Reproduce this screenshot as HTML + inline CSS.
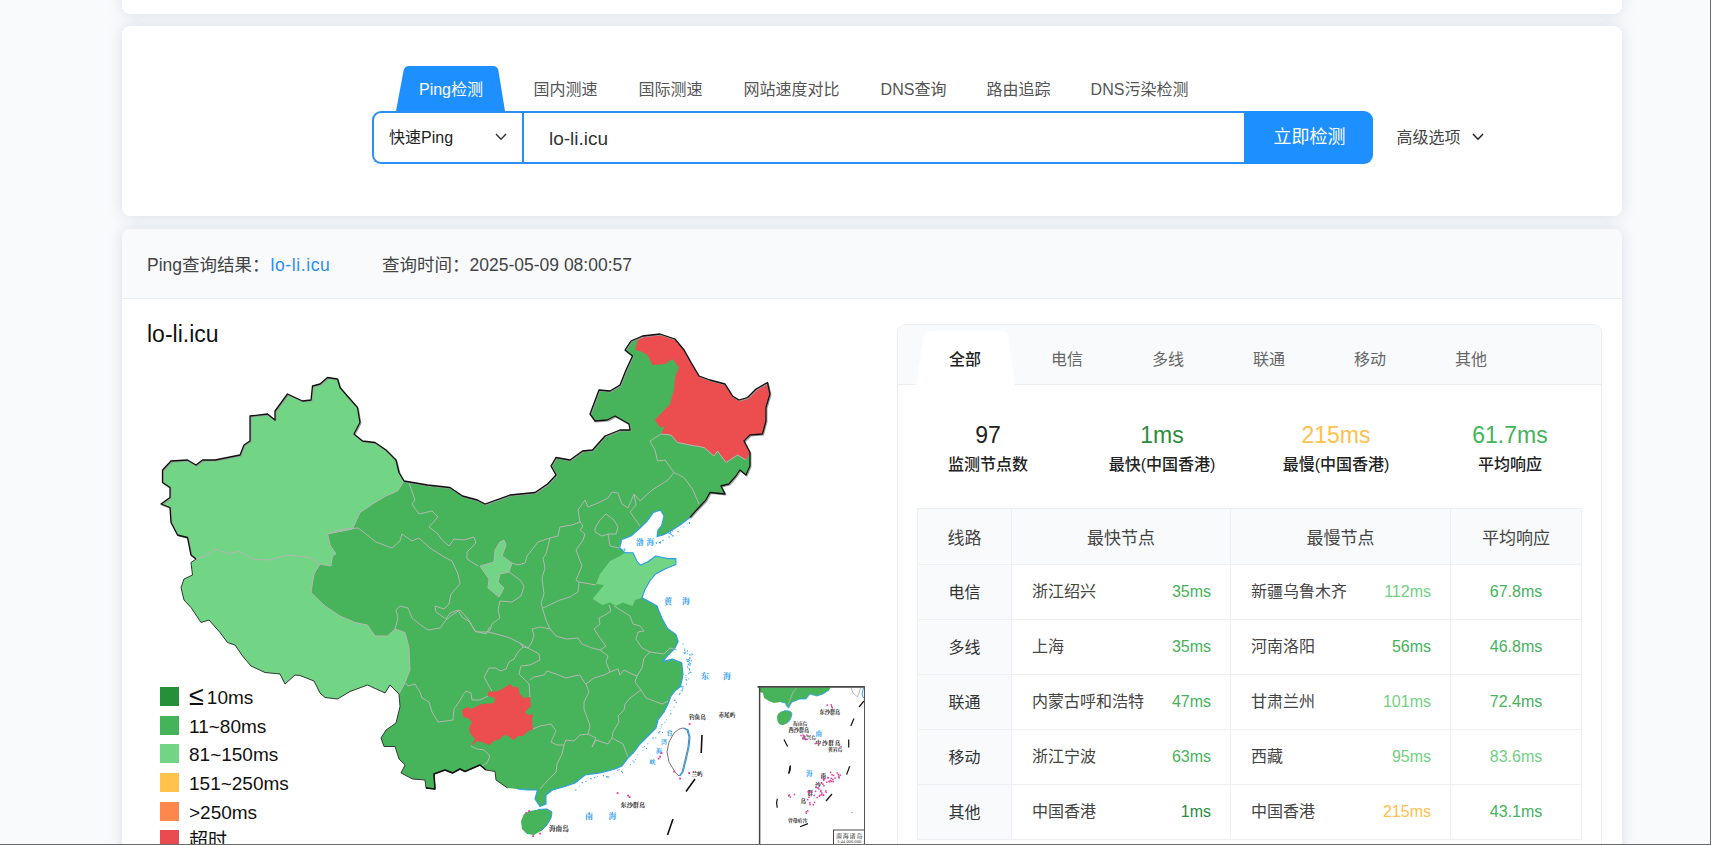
<!DOCTYPE html>
<html lang="zh-CN">
<head>
<meta charset="utf-8">
<title>Ping检测 - lo-li.icu</title>
<style>
*{box-sizing:border-box;margin:0;padding:0}
html,body{width:1711px;height:845px;overflow:hidden}
body{position:relative;background:#f8fafc;font-family:"Liberation Sans","Noto Sans CJK SC",sans-serif;color:#333;font-size:16px}
.abs{position:absolute}
.card{position:absolute;left:122px;width:1500px;background:#fff;border-radius:8px;box-shadow:0 0 14px rgba(110,130,160,.22)}
.t{position:absolute;white-space:nowrap;line-height:1}
.c{transform:translateX(-50%)}
.frame-r{position:absolute;left:1710px;top:0;width:1px;height:845px;background:#6a6a6a;z-index:50}
.frame-b{position:absolute;left:0;top:844px;width:1711px;height:1px;background:#6a6a6a;z-index:50}
/* search */
.navtab{position:absolute;top:82px;font-size:16px;color:#555;line-height:16px;white-space:nowrap;transform:translateX(-50%)}
.sel{position:absolute;left:372px;top:111px;width:152px;height:53px;border:2px solid #2b8ef5;border-right:none;border-radius:9px 0 0 9px;background:#fff}
.inp{position:absolute;left:522px;top:111px;width:724px;height:53px;border:2px solid #2b8ef5;border-right-color:#1e8fff;background:#fff}
.btn{position:absolute;left:1245.5px;top:111px;width:127px;height:53px;background:#1e8fff;border-radius:0 9px 9px 0}
/* result */
.rhead{position:absolute;left:0;top:0;width:1500px;height:70px;background:#f8fafc;border-bottom:1px solid #eceef1;border-radius:8px 8px 0 0}
.panel{position:absolute;left:897px;top:324px;width:705px;height:600px;border:1px solid #ebedf0;border-radius:9px;background:#fff;overflow:hidden}
.ptabs{position:absolute;left:0;top:0;width:703px;height:60px;background:#f8fafc;border-bottom:1px solid #ebedf0}
.ptab{position:absolute;top:352px;font-size:16px;line-height:16px;color:#666;white-space:nowrap}
.num{position:absolute;top:424px;font-size:23px;line-height:23px;white-space:nowrap;transform:translateX(-50%)}
.lab{position:absolute;top:457px;font-size:16px;line-height:16px;color:#222;font-weight:500;white-space:nowrap;transform:translateX(-50%)}
table{position:absolute;left:917px;top:508px;border-collapse:collapse;table-layout:fixed;width:664px;font-size:16px;color:#444}
td,th{border:1px solid #edeff2;height:55px;padding:0;font-weight:400;position:relative}
th{height:56px;background:#f8fafc;font-size:17px;color:#444;text-align:center}
td.k{background:#f8fafc;text-align:center;color:#333;padding-bottom:2px}
td .l{position:absolute;left:20px;top:19px;line-height:16px;white-space:nowrap}
td .r{position:absolute;right:19px;top:19px;line-height:16px;white-space:nowrap}
td.a{text-align:center}
.g1{color:#2a8c3c}.g2{color:#45b35a}.g3{color:#72d083}.y{color:#ffc04d}
.lg{position:absolute;left:160px;width:19px;height:19px}
.lgt{position:absolute;left:189px;font-size:19px;line-height:19px;color:#111;white-space:nowrap}
</style>
</head>
<body>
<!-- top card remnant -->
<div class="card" style="top:-20px;height:34px"></div>

<!-- search card -->
<div class="card" style="top:26px;height:190px"></div>
<svg class="abs" style="left:390px;top:60px" width="120" height="52" viewBox="390 60 120 52"><path d="M396 111 L403.6 70.5 Q404.6 66 409 66 L493 66 Q497.400 66 498.400 70.500 L505 111 Z" fill="#1e8fff"/></svg>
<div class="navtab" style="left:451px;color:#fff">Ping检测</div>
<div class="navtab" style="left:565.5px">国内测速</div>
<div class="navtab" style="left:670.500px">国际测速</div>
<div class="navtab" style="left:791.5px">网站速度对比</div>
<div class="navtab" style="left:913.5px">DNS查询</div>
<div class="navtab" style="left:1018.5px">路由追踪</div>
<div class="navtab" style="left:1139.5px">DNS污染检测</div>
<div class="sel"></div>
<div class="inp"></div>
<div class="btn"></div>
<div class="t" style="left:389px;top:130px;font-size:16px;color:#222">快速Ping</div>
<svg class="abs" style="left:494px;top:131px" width="14" height="12" viewBox="0 0 14 12"><path d="M2 3 L7 8.200 L12 3" fill="none" stroke="#333" stroke-width="1.400"/></svg>
<div class="t" style="left:549px;top:129px;font-size:19px;color:#333">lo-li.icu</div>
<div class="t c" style="left:1309.5px;top:128px;font-size:18px;color:#fff">立即检测</div>
<div class="t" style="left:1396.5px;top:130px;font-size:16px;color:#444">高级选项</div>
<svg class="abs" style="left:1471px;top:131px" width="14" height="12" viewBox="0 0 14 12"><path d="M2 3 L7 8.200 L12 3" fill="none" stroke="#222" stroke-width="1.500"/></svg>

<!-- result card -->
<div class="card" style="top:229px;height:700px"><div class="rhead"></div></div>
<div class="t" style="left:147px;top:257px;font-size:17.5px;color:#444">Ping查询结果：<span style="color:#2b8ef5;margin-left:1px;letter-spacing:0.6px">lo-li.icu</span></div>
<div class="t" style="left:382px;top:257px;font-size:17.5px;color:#444">查询时间：2025-05-09 08:00:57</div>
<div class="t" style="left:147px;top:323px;font-size:23px;color:#111">lo-li.icu</div>

<!-- MAP -->
<svg id="map" class="abs" style="left:140px;top:320px" width="740" height="525" viewBox="140 320 740 525">
<path d="M196 559 L191 555 L187.5 537.5 L177.5 535 L171 522.5 L170 507.5 L161 504 L170 497.5 L170 487.5 L162.5 482.5 L162.5 470 L171 461 L187.5 460 L196 465 L202.5 460 L215 460 L240 455 L244 445 L250 441 L250 416 L267.5 414 L275 420 L275 411 L287.5 394 L302.5 401 L311 400 L312.5 386 L320 384 L327.5 377.5 L337.5 379 L340 387.5 L350 399 L357.5 407.5 L360 422.5 L354 434 L362.5 441 L375 442.5 L386 450 L396 460 L399 472.5 L404 481 L427.5 485 L450 487.5 L462.5 496 L477.5 500 L485 504 L510 495 L535 492.5 L547.5 484 L556 475 L551 466 L556 457.5 L570 460 L582.5 451 L592.5 450 L605 436 L620 430 L630 430 L629 424 L615 416 L607.5 420 L595 421 L590 414 L599 390 L610 391 L620 385 L626 370 L632.5 356 L625 350 L631 341 L642.5 336 L660 334 L675 339 L684 350 L691 362.5 L699 376 L710 380 L725 384 L732.5 396 L739 400 L747.5 397.5 L756 389 L767.5 382.5 L770 394 L766 407.5 L766 421 L762.5 434 L750 435 L744 441 L750 452.5 L750 466 L746 475 L740 470 L736 476 L729 484 L721 486 L725 494 L710 492.5 L706 500 L697.5 509 L690 517.5 L679.4 525.5 L670 531.4 L663 535 L657 536.5 L658 530 L661.7 525.5 L664 516 L660.5 510 L653.4 512.5 L647.5 520.8 L639 529 L631 536 L621.4 539.7 L619.8 548 L625 552.7 L633 552.7 L636.8 561 L640.4 565 L647.5 562 L655.7 556 L667.6 558.6 L675.9 558.6 L675.9 564.6 L665 569 L655.7 574 L649.8 581 L645 589.4 L642 597.7 L651 602.4 L657 606 L661.7 617.8 L667.6 628.5 L675.9 634.4 L678.2 641.5 L674.7 648.6 L667.6 655.7 L662.8 661.6 L672.3 659 L681.8 662.8 L683 674.6 L680.6 686.5 L676 690 L671 696 L668 704 L664 712 L658 720 L656 728 L648 736 L640 744 L634 752 L628 758 L622 766 L615 769 L600 773 L585 775 L575 783 L565 786.5 L552.5 790 L546 795 L546 804 L540 806.5 L535 799 L537.5 790 L527.5 790 L517.5 789 L507.5 788 L496 780 L495 771.5 L486 770 L480 765 L465 771.5 L460 769 L452.5 773 L445 770 L434 774 L435 789 L426 788 L425 780 L412.5 779 L401 773 L405 765 L399 759 L395 746.5 L384 746.5 L381 738 L386 730 L396 723 L400 706.5 L399 694 L390 685 L385 693 L367.5 685 L350 691.5 L337.5 699 L325 697.5 L320 693 L314 681 L300 675.5 L295 675 L285 684 L280 674 L265 672.5 L251 666 L242.5 656 L235 645 L227.5 642.5 L220 632.5 L209 620 L201 622.5 L191 607.5 L184 600 L181 587.5 L184 579 L192.5 575 L191 562.5 L196 559 Z" fill="#47b35a"/>
<path d="M524 814 L530 811 L538 809.5 L547 809 L552 812 L551 818 L547 825 L541 831 L534 835 L527 834 L522 829 L521 821 Z" fill="#47b35a"/>
<path d="M196 559 L191 555 L187.5 537.5 L177.5 535 L171 522.5 L170 507.5 L161 504 L170 497.5 L170 487.5 L162.5 482.5 L162.5 470 L171 461 L187.5 460 L196 465 L202.5 460 L215 460 L240 455 L244 445 L250 441 L250 416 L267.5 414 L275 420 L275 411 L287.5 394 L302.5 401 L311 400 L312.5 386 L320 384 L327.5 377.5 L337.5 379 L340 387.5 L350 399 L357.5 407.5 L360 422.5 L354 434 L362.5 441 L375 442.5 L386 450 L396 460 L399 472.5 L404 481 L397.5 491 L386 496 L375 502.5 L360 512.5 L352.5 529 L327.5 534 L330 545 L336 554 L332.5 556 L331 566 L320 564 L310 557.5 L287.5 555 L270 560 L252.5 559 L239 551 L229 554 L215 549 L206 556 L196 559 Z" fill="#72d485"/>
<path d="M196 559 L206 556 L215 549 L229 554 L239 551 L252.5 559 L270 560 L287.5 555 L310 557.5 L320 564 L314 574 L311 592.5 L325 606 L340 616 L355 622.5 L367.5 625 L375 636 L387.5 636 L395 629 L405 632.5 L409 647.5 L410 670 L405 682.5 L399 694 L390 685 L385 693 L367.5 685 L350 691.5 L337.5 699 L325 697.5 L320 693 L314 681 L300 675.5 L295 675 L285 684 L280 674 L265 672.5 L251 666 L242.5 656 L235 645 L227.5 642.5 L220 632.5 L209 620 L201 622.5 L191 607.5 L184 600 L181 587.5 L184 579 L192.5 575 L191 562.5 L196 559 Z" fill="#72d485"/>
<path d="M504 540 L506 545 L502 556 L512 563 L509 572 L500 574 L498 582 L504 588 L499 597 L488 588 L489 579 L480 566 L494 562 L495 550 L500 542 Z" fill="#72d485"/>
<path d="M625 552.7 L633 552.7 L636.8 561 L640.4 565 L647.5 562 L655.7 556 L667.6 558.6 L675.9 558.6 L675.9 564.6 L665 569 L655.7 574 L649.8 581 L645 589.4 L642 597.7 L635 600 L632.5 606 L622.5 602.5 L616 606 L610 602.5 L602.5 605 L592.5 599 L604 585 L596 584 L600 574 L610 561 L620 556 Z" fill="#72d485"/>
<path d="M642.5 336 L660 334 L675 339 L684 350 L691 362.5 L699 376 L710 380 L725 384 L732.5 396 L739 400 L747.5 397.5 L756 389 L767.5 382.5 L770 394 L766 407.5 L766 421 L762.5 434 L750 435 L744 441 L750 452.5 L746 460 L737.5 455 L726 462.5 L717.5 451 L714 456 L704 447.5 L690 445 L677.5 442.5 L671 435 L661 434 L665 426 L660 427.5 L655 420 L670 404 L674 390 L675 377.5 L679 367.5 L672.5 359 L665 364 L652.5 365 L647.5 355 L640 351 L635 350 L637.5 341 Z" fill="#ec4e50"/>
<path d="M462 710 L467 707 L471 709 L482 704 L494 703 L495 698 L488 696 L488 692 L498 691 L504 688 L510 684 L513 687 L518 687 L520 694 L524 698 L530 697 L531 706 L525 712 L528 715 L533 714 L532 720 L533 729 L527 732 L523 736 L518 736 L514 740 L508 736 L504 735 L500 739 L494 741 L489 745 L482 742 L477 741 L471 746 L475 739 L470 733 L469 728 L472 722 L468 718 L463 717 Z" fill="#ec4e50"/>
<path d="M196 559 L206 556 L215 549 L229 554 L239 551 L252.5 559 L270 560 L287.5 555 L310 557.5 L320 564 M320 564 L331 566 L332.5 556 L336 554 L330 545 L327.5 534 L352.5 529 L360 512.5 L375 502.5 L386 496 L397.5 491 L404 481 M320 564 L314 574 L311 592.5 L325 606 L340 616 L355 622.5 L367.5 625 L375 636 L387.5 636 L395 629 M395 629 L405 632.5 L409 647.5 L410 670 L405 682.5 L399 694 M409 483 L415 500 L412 504 L419 514 L432 511 L438 517 L429 527 L438 534 L442 540 L449 546 L454 539 L464 540 L474 537 L476 543 L467 552 L467 559 L478 566 M327.5 534 L340 529.6 L358 528 L366 534 L376 542 L392 548 L400 541 L402 534 L412 541 L419 538 L430 548 L444 557 L452 561 L458 574 L460 584 L451 594 L449 604 L444 609 L435 606 L436 612 L446 619 L450 613 L458 610 L462 617 L470 622 L475 631 L486 634 L490 627 M395 629 L398 618 L396 610 L400 606 L408 608 L412 618 L422 626 L428 630 L440 628 L446 620 M504 540 L506 545 L502 556 L512 563 L509 572 L500 574 L498 582 L504 588 L499 597 L488 588 L489 579 L480 566 L494 562 L495 550 L500 542 L504 540 M509 572 L520 580 L524 586 L521 596 L512 602 L500 601 L498 610 L500 618 L492 624 L490 630 L488 632 M512 563 L518 565 L525 563 L527 556 L538 542 L550 538 L558 536 L560 527 L572 525 L580 522 L578 510 L585 500 L588 507 L598 503 L608 498 L612 492 L618 493 L622 504 L628 508 L634 494 L640 501 L652 490 L668 480 L674 472.5 M550 538 L546 554 L543 558 L545 568 L542 578 L544 594 L541 603 L543 610 L546 620 L550 629 M580 522 L583 526 L580 530 L585 534 L583 540 L576 550 L579 558 L582 566 L576 580 L579 582 L578 592 L570 597 L560 600 L543 608 M579 582 L596 585 M595 528 L600 520 L606 514 L614 520 L618 527 L616 534 L608 534 L602 536 L595 532 L595 528 M608 534 L610 546 L619 548 L622 541 M634 494 L636 505 L630 512 L640 526 M488 632 L476 632 L472 626 L468 619 L460 610 L452 615 L446 620 M488 632 L500 635 L510 638 L520 643 L528 648 L532 642 L534 635 L532 629 L540 627 L550 629 M550 629 L556 636 L566 639 L578 638 L582 644 L592 648 L600 650 L608 656 L606 662 L610 672 M586 684 L594 678 L604 675 L610 672 L618 669 L620 675 L624 670 L632 674 L637 676 M600 650 L606 646 L600 638 L594 629 L600 624 L599 618 L605 615 L611 611 L609 605 M614 606 L622 611 L630 616 L633 624 L640 626 L644 631 L638 632 L636 639 L642 648 L650 652 M637 676 L642 668 L644 658 L650 652 L664 654 L670 648 L677 650 M637 676 L635 682 L641 690 L630 698 L625 704 L624 710 L618 716 L619 722 L613 732 L612 738 L623 744 L628 757 M592 747 L596 740 L608 744 L612 738 M641 690 L646 698 L654 701 L662 704 L668 701 M492 691 L489 686 L484 677 L489 668 L496 668 L500 671 L506 669 L509 662 L514 659 L518 652 L523 647 L520 643 M523 647 L528 648 L539 654 L540 660 L530 665 L521 666 L519 674 L524 679 L529 684 L530 697 M530 680 L534 677 L544 675 L547 671 L556 674 L566 678 L574 676 L580 675 L584 682 L586 684 M586 684 L589 692 L584 702 L584 709 L588 720 L590 726 L588 734 L596 738 L592 747 M533 729 L540 726 L551 724 L556 731 L551 742 L557 745 L564 745 L566 740 L574 741 L580 735 L588 734 M564 745 L562 754 L557 764 L556 772 L548 780 L540 789 M405 682.5 L408 686 L415 684 L420 692 L422 698 L429 702 L432 712 L438 722 L446 721 L453 720 L454 709 L459 702 L463 695 L466 691 L471 693 L472 700 L480 700 L488 696 M471 746 L477 749 L484 750 L490 756 L487 763 L482 766 M661 434 L650 441 L655 450 L657.5 461 L665 460 L674 472.5 M674 472.5 L684 477.5 L692.5 489 L699 504 M746 460 L737.5 455 L726 462.5 L717.5 451 L714 456 L704 447.5 L690 445 L677.5 442.5 L671 435 L661 434" fill="none" stroke="#b4b8b4" stroke-width="1" stroke-linejoin="round"/>
<path d="M690 517.5 L679.4 525.5 L670 531.4 L663 535 L657 536.5 L658 530 L661.7 525.5 L664 516 L660.5 510 L653.4 512.5 L647.5 520.8 L639 529 L631 536 L621.4 539.7 L619.8 548 L625 552.7 L633 552.7 L636.8 561 L640.4 565 L647.5 562 L655.7 556 L667.6 558.6 L675.9 558.6 L675.9 564.6 L665 569 L655.7 574 L649.8 581 L645 589.4 L642 597.7 L651 602.4 L657 606 L661.7 617.8 L667.6 628.5 L675.9 634.4 L678.2 641.5 L674.7 648.6 L667.6 655.7 L662.8 661.6 L672.3 659 L681.8 662.8 L683 674.6 L680.6 686.5 L676 690 L671 696 L668 704 L664 712 L658 720 L656 728 L648 736 L640 744 L634 752 L628 758 L622 766 L615 769 L600 773 L585 775 L575 783 L565 786.5 L552.5 790 L546 795 L546 804 L540 806.5 L535 799 L537.5 790 L527.5 790 L517.5 789" fill="none" stroke="#2a9df0" stroke-width="1.1" stroke-linejoin="round"/>
<path d="M538 809.5 L547 809 L552 812 L551 818 L547 825 L541 831" fill="none" stroke="#2a9df0" stroke-width="1"/>
<path d="M196 559 L191 555 L187.5 537.5 L177.5 535 L171 522.5 L170 507.5 L161 504 L170 497.5 L170 487.5 L162.5 482.5 L162.5 470 L171 461 L187.5 460 L196 465 L202.5 460 L215 460 L240 455 L244 445 L250 441 L250 416 L267.5 414 L275 420 L275 411 L287.5 394 L302.5 401 L311 400 L312.5 386 L320 384 L327.5 377.5 L337.5 379 L340 387.5 L350 399 L357.5 407.5 L360 422.5 L354 434 L362.5 441 L375 442.5 L386 450 L396 460 L399 472.5 L404 481 L427.5 485 L450 487.5 L462.5 496 L477.5 500 L485 504 L510 495 L535 492.5 L547.5 484 L556 475 L551 466 L556 457.5 L570 460 L582.5 451 L592.5 450 L605 436 L620 430 L630 430 L629 424 L615 416 L607.5 420 L595 421 L590 414 L599 390 L610 391 L620 385 L626 370 L632.5 356 L625 350 L631 341 L642.5 336 L660 334 L675 339 L684 350 L691 362.5 L699 376 L710 380 L725 384 L732.5 396 L739 400 L747.5 397.5 L756 389 L767.5 382.5 L770 394 L766 407.5 L766 421 L762.5 434 L750 435 L744 441 L750 452.5 L750 466 L746 475 L740 470 L736 476 L729 484 L721 486 L725 494 L710 492.5 L706 500 L697.5 509 L690 517.5" fill="none" stroke="#9a9a9a" stroke-width="1.1" stroke-linejoin="round" transform="translate(0.9,1)"/>
<path d="M196 559 L191 555 L187.5 537.5 L177.5 535 L171 522.5 L170 507.5 L161 504 L170 497.5 L170 487.5 L162.5 482.5 L162.5 470 L171 461 L187.5 460 L196 465 L202.5 460 L215 460 L240 455 L244 445 L250 441 L250 416 L267.5 414 L275 420 L275 411 L287.5 394 L302.5 401 L311 400 L312.5 386 L320 384 L327.5 377.5 L337.5 379 L340 387.5 L350 399 L357.5 407.5 L360 422.5 L354 434 L362.5 441 L375 442.5 L386 450 L396 460 L399 472.5 L404 481 L427.5 485 L450 487.5 L462.5 496 L477.5 500 L485 504 L510 495 L535 492.5 L547.5 484 L556 475 L551 466 L556 457.5 L570 460 L582.5 451 L592.5 450 L605 436 L620 430 L630 430 L629 424 L615 416 L607.5 420 L595 421 L590 414 L599 390 L610 391 L620 385 L626 370 L632.5 356 L625 350 L631 341 L642.5 336 L660 334 L675 339 L684 350 L691 362.5 L699 376 L710 380 L725 384 L732.5 396 L739 400 L747.5 397.5 L756 389 L767.5 382.5 L770 394 L766 407.5 L766 421 L762.5 434 L750 435 L744 441 L750 452.5 L750 466 L746 475 L740 470 L736 476 L729 484 L721 486 L725 494 L710 492.5 L706 500 L697.5 509 L690 517.5" fill="none" stroke="#111" stroke-width="1.3" stroke-linejoin="round"/>
<path d="M507.5 788 L496 780 L495 771.5 L486 770 L480 765 L465 771.5 L460 769 L452.5 773 L445 770 L434 774 L435 789 L426 788 L425 780 L412.5 779 L401 773 L405 765 L399 759 L395 746.5 L384 746.5 L381 738 L386 730 L396 723 L400 706.5 L399 694 L390 685 L385 693 L367.5 685 L350 691.5 L337.5 699 L325 697.5 L320 693 L314 681 L300 675.5 L295 675 L285 684 L280 674 L265 672.5 L251 666 L242.5 656 L235 645 L227.5 642.5 L220 632.5 L209 620 L201 622.5 L191 607.5 L184 600 L181 587.5 L184 579 L192.5 575 L191 562.5 L196 559" fill="none" stroke="#2a2a2a" stroke-width="0.9" stroke-linejoin="round"/>
<path d="M486 770 L480 765 L465 771.5 L460 769 L452.5 773 L445 770 L434 774 L435 789 L426 788" fill="none" stroke="#111" stroke-width="1.5" stroke-linejoin="round"/>
<path d="M683 728 L687 730 L689 737 L688 747 L685 760 L682 772 L679 776 L675 772 L669 762 L667 752 L669 742 L674 733 L679 729 Z" fill="#fff" stroke="#555" stroke-width="0.8"/>
<path d="M683 728 L687 730 L689 737 L688 747 L685 760 L682 772 L679 776" fill="none" stroke="#2a9df0" stroke-width="1.2" transform="translate(1,0)"/>
<text x="636" y="544.5" font-size="7.5" fill="#2a9df0" font-family="Liberation Serif, Noto Serif CJK SC, serif" font-weight="700" >渤</text>
<text x="646.5" y="544.5" font-size="7.5" fill="#2a9df0" font-family="Liberation Serif, Noto Serif CJK SC, serif" font-weight="700" >海</text>
<text x="664" y="603.5" font-size="8" fill="#2a9df0" font-family="Liberation Serif, Noto Serif CJK SC, serif" font-weight="700" >黄</text>
<text x="682" y="603.5" font-size="8" fill="#2a9df0" font-family="Liberation Serif, Noto Serif CJK SC, serif" font-weight="700" >海</text>
<text x="701" y="679" font-size="8" fill="#2a9df0" font-family="Liberation Serif, Noto Serif CJK SC, serif" font-weight="700" >东</text>
<text x="723" y="679" font-size="8" fill="#2a9df0" font-family="Liberation Serif, Noto Serif CJK SC, serif" font-weight="700" >海</text>
<text x="585" y="818.5" font-size="8" fill="#2a9df0" font-family="Liberation Serif, Noto Serif CJK SC, serif" font-weight="700" >南</text>
<text x="608.5" y="818.5" font-size="8" fill="#2a9df0" font-family="Liberation Serif, Noto Serif CJK SC, serif" font-weight="700" >海</text>
<text x="666.5" y="735" font-size="6" fill="#2a9df0" font-family="Liberation Serif, Noto Serif CJK SC, serif" font-weight="700" >台</text>
<text x="661" y="744" font-size="6" fill="#2a9df0" font-family="Liberation Serif, Noto Serif CJK SC, serif" font-weight="700" >湾</text>
<text x="656" y="753" font-size="6" fill="#2a9df0" font-family="Liberation Serif, Noto Serif CJK SC, serif" font-weight="700" >海</text>
<text x="649.5" y="764" font-size="6" fill="#2a9df0" font-family="Liberation Serif, Noto Serif CJK SC, serif" font-weight="700" >峡</text>
<text x="689" y="718.5" font-size="5.6" fill="#222" font-family="Liberation Serif, Noto Serif CJK SC, serif" font-weight="700" >钓鱼岛</text>
<text x="718.5" y="716.5" font-size="5.6" fill="#222" font-family="Liberation Serif, Noto Serif CJK SC, serif" font-weight="700" >赤尾屿</text>
<text x="691.5" y="775.5" font-size="5.6" fill="#222" font-family="Liberation Serif, Noto Serif CJK SC, serif" font-weight="700" >兰屿</text>
<text x="620.5" y="806.5" font-size="6.2" fill="#222" font-family="Liberation Serif, Noto Serif CJK SC, serif" font-weight="700" >东沙群岛</text>
<text x="549" y="830.5" font-size="6.6" fill="#222" font-family="Liberation Serif, Noto Serif CJK SC, serif" font-weight="700" >海南岛</text>
<rect x="659.2" y="755.7" width="1.8" height="1.8" fill="#e83aa0"/>
<rect x="660.7" y="752.2" width="1.8" height="1.8" fill="#e83aa0"/>
<rect x="657.7" y="757.7" width="1.8" height="1.8" fill="#e83aa0"/>
<rect x="616.7" y="792.2" width="1.8" height="1.8" fill="#e83aa0"/>
<rect x="628.7" y="796.2" width="1.8" height="1.8" fill="#e83aa0"/>
<rect x="627.2" y="794.7" width="1.8" height="1.8" fill="#e83aa0"/>
<rect x="688.7" y="723.2" width="1.8" height="1.8" fill="#e83aa0"/>
<rect x="688.2" y="772.2" width="1.8" height="1.8" fill="#e83aa0"/>
<rect x="679.2" y="777.7" width="1.8" height="1.8" fill="#e83aa0"/>
<rect x="673.2" y="770.7" width="1.8" height="1.8" fill="#e83aa0"/>
<rect x="528.2" y="810.2" width="1.8" height="1.8" fill="#e83aa0"/>
<rect x="525.2" y="812.2" width="1.8" height="1.8" fill="#e83aa0"/>
<rect x="532.2" y="835.2" width="1.8" height="1.8" fill="#e83aa0"/>
<rect x="539.2" y="832.7" width="1.8" height="1.8" fill="#e83aa0"/>
<path d="M702 735 L701.2 753" stroke="#111" stroke-width="1.6" fill="none"/>
<path d="M695 779 L686 791.5" stroke="#111" stroke-width="1.6" fill="none"/>
<path d="M673 819 L667.5 835" stroke="#111" stroke-width="1.6" fill="none"/>
<rect x="652.5" y="737.5" width="1.2" height="1.2" fill="#2a9df0"/>
<rect x="685.4" y="677.2" width="0.8" height="0.8" fill="#2a9df0"/>
<rect x="687.0" y="666.4" width="1" height="1" fill="#2a9df0"/>
<rect x="686.8" y="660.8" width="1.2" height="1.2" fill="#2a9df0"/>
<rect x="579.3" y="785.8" width="0.8" height="0.8" fill="#2a9df0"/>
<rect x="686.3" y="658.8" width="1.2" height="1.2" fill="#2a9df0"/>
<rect x="686.4" y="679.9" width="0.8" height="0.8" fill="#2a9df0"/>
<rect x="581.7" y="782.0" width="1.2" height="1.2" fill="#2a9df0"/>
<rect x="688.9" y="669.1" width="1.2" height="1.2" fill="#2a9df0"/>
<rect x="633.7" y="761.7" width="1" height="1" fill="#2a9df0"/>
<rect x="660.9" y="726.5" width="0.8" height="0.8" fill="#2a9df0"/>
<rect x="585.5" y="781.0" width="1" height="1" fill="#2a9df0"/>
<rect x="659.7" y="728.4" width="0.8" height="0.8" fill="#2a9df0"/>
<rect x="659.2" y="731.1" width="1.2" height="1.2" fill="#2a9df0"/>
<rect x="688.8" y="672.5" width="1" height="1" fill="#2a9df0"/>
<rect x="655.3" y="737.3" width="1" height="1" fill="#2a9df0"/>
<rect x="690.1" y="671.8" width="1.2" height="1.2" fill="#2a9df0"/>
<rect x="689.2" y="664.6" width="1.2" height="1.2" fill="#2a9df0"/>
<rect x="629.8" y="764.4" width="0.8" height="0.8" fill="#2a9df0"/>
<rect x="630.1" y="764.3" width="0.8" height="0.8" fill="#2a9df0"/>
<rect x="661.3" y="724.1" width="1" height="1" fill="#2a9df0"/>
<rect x="688.1" y="664.4" width="0.8" height="0.8" fill="#2a9df0"/>
<rect x="632.5" y="760.4" width="1" height="1" fill="#2a9df0"/>
<rect x="637.5" y="754.0" width="0.8" height="0.8" fill="#2a9df0"/>
<rect x="673.6" y="706.5" width="1" height="1" fill="#2a9df0"/>
<rect x="682.4" y="643.6" width="1" height="1" fill="#2a9df0"/>
<rect x="681.8" y="689.4" width="1.2" height="1.2" fill="#2a9df0"/>
<rect x="688.7" y="659.7" width="1.2" height="1.2" fill="#2a9df0"/>
<rect x="594.2" y="776.9" width="1.2" height="1.2" fill="#2a9df0"/>
<rect x="642.6" y="746.9" width="0.8" height="0.8" fill="#2a9df0"/>
<rect x="685.5" y="675.1" width="0.8" height="0.8" fill="#2a9df0"/>
<rect x="597.0" y="776.0" width="0.8" height="0.8" fill="#2a9df0"/>
<rect x="575.2" y="789.6" width="1.2" height="1.2" fill="#2a9df0"/>
<rect x="647.3" y="743.3" width="1" height="1" fill="#2a9df0"/>
<rect x="617.2" y="770.0" width="1" height="1" fill="#2a9df0"/>
<rect x="666.3" y="719.4" width="0.8" height="0.8" fill="#2a9df0"/>
<rect x="608.1" y="776.4" width="1.2" height="1.2" fill="#2a9df0"/>
<rect x="661.9" y="732.0" width="1" height="1" fill="#2a9df0"/>
<rect x="606.2" y="775.9" width="1.2" height="1.2" fill="#2a9df0"/>
<rect x="590.1" y="778.1" width="0.8" height="0.8" fill="#2a9df0"/>
<rect x="670.1" y="713.1" width="1.2" height="1.2" fill="#2a9df0"/>
<rect x="618.5" y="769.2" width="1" height="1" fill="#2a9df0"/>
<rect x="622.1" y="772.2" width="1" height="1" fill="#2a9df0"/>
<rect x="644.4" y="746.1" width="0.8" height="0.8" fill="#2a9df0"/>
<rect x="621.1" y="770.7" width="1.2" height="1.2" fill="#2a9df0"/>
<rect x="684.4" y="648.3" width="0.8" height="0.8" fill="#2a9df0"/>
<rect x="685.9" y="683.5" width="1" height="1" fill="#2a9df0"/>
<rect x="678.8" y="693.5" width="1.2" height="1.2" fill="#2a9df0"/>
<rect x="642.6" y="749.7" width="0.8" height="0.8" fill="#2a9df0"/>
<rect x="673.8" y="699.8" width="1" height="1" fill="#2a9df0"/>
<rect x="682.4" y="688.3" width="1" height="1" fill="#2a9df0"/>
<rect x="681.0" y="686.1" width="1.2" height="1.2" fill="#2a9df0"/>
<rect x="688.0" y="678.5" width="0.8" height="0.8" fill="#2a9df0"/>
<rect x="674.4" y="699.7" width="1.2" height="1.2" fill="#2a9df0"/>
<rect x="658.1" y="732.2" width="1.2" height="1.2" fill="#2a9df0"/>
<rect x="645.9" y="747.8" width="1.2" height="1.2" fill="#2a9df0"/>
<rect x="634.9" y="759.1" width="0.8" height="0.8" fill="#2a9df0"/>
<rect x="606.7" y="776.5" width="1.2" height="1.2" fill="#2a9df0"/>
<rect x="684.1" y="649.5" width="1.2" height="1.2" fill="#2a9df0"/>
<rect x="685.6" y="679.1" width="1.2" height="1.2" fill="#2a9df0"/>
<rect x="613.7" y="772.9" width="0.8" height="0.8" fill="#2a9df0"/>
<rect x="675.6" y="701.7" width="1.2" height="1.2" fill="#2a9df0"/>
<rect x="686.8" y="650.4" width="1.2" height="1.2" fill="#2a9df0"/>
<rect x="602.9" y="775.1" width="1.2" height="1.2" fill="#2a9df0"/>
<rect x="590.5" y="778.2" width="1.2" height="1.2" fill="#2a9df0"/>
<rect x="664.4" y="721.8" width="1" height="1" fill="#2a9df0"/>
<rect x="682.4" y="686.2" width="1.2" height="1.2" fill="#2a9df0"/>
<rect x="669.8" y="710.2" width="0.8" height="0.8" fill="#2a9df0"/>
<rect x="681.3" y="690.5" width="1" height="1" fill="#2a9df0"/>
<rect x="679.6" y="692.9" width="1" height="1" fill="#2a9df0"/>
<rect x="690.4" y="654.4" width="1.2" height="1.2" fill="#2a9df0"/>
<rect x="687.6" y="663.6" width="1" height="1" fill="#2a9df0"/>
<rect x="689.2" y="654.2" width="1" height="1" fill="#2a9df0"/>
<rect x="688.1" y="661.1" width="1" height="1" fill="#2a9df0"/>
<rect x="688.2" y="673.5" width="0.8" height="0.8" fill="#2a9df0"/>
<rect x="683.5" y="652.1" width="0.8" height="0.8" fill="#2a9df0"/>
<rect x="689.9" y="663.1" width="1.2" height="1.2" fill="#2a9df0"/>
<rect x="689.3" y="658.1" width="1" height="1" fill="#2a9df0"/>
<rect x="687.7" y="667.9" width="0.8" height="0.8" fill="#2a9df0"/>
<rect x="687.2" y="660.8" width="0.8" height="0.8" fill="#2a9df0"/>
<rect x="691.4" y="652.9" width="0.8" height="0.8" fill="#2a9df0"/>
<rect x="692.2" y="653.8" width="1" height="1" fill="#2a9df0"/>
<rect x="688.4" y="663.9" width="0.8" height="0.8" fill="#2a9df0"/>
<rect x="684.2" y="652.9" width="1.2" height="1.2" fill="#2a9df0"/>
<rect x="687.6" y="659.1" width="1.2" height="1.2" fill="#2a9df0"/>
<rect x="687.0" y="653.3" width="0.8" height="0.8" fill="#2a9df0"/>
<rect x="684.1" y="652.2" width="1.2" height="1.2" fill="#2a9df0"/>
<rect x="689.3" y="657.2" width="1.2" height="1.2" fill="#2a9df0"/>
<rect x="688.9" y="662.3" width="1.2" height="1.2" fill="#2a9df0"/>
<rect x="690.7" y="660.2" width="1.2" height="1.2" fill="#2a9df0"/>
<rect x="688.9" y="668.4" width="0.8" height="0.8" fill="#2a9df0"/>
<rect x="684.6" y="651.7" width="1" height="1" fill="#2a9df0"/>
<rect x="670.1" y="532.4" width="1.2" height="1.2" fill="#2a9df0"/>
<rect x="686.8" y="522.8" width="0.8" height="0.8" fill="#2a9df0"/>
<rect x="670.1" y="531.5" width="1" height="1" fill="#2a9df0"/>
<rect x="683.4" y="526.4" width="1" height="1" fill="#2a9df0"/>
<rect x="668.6" y="532.9" width="1.2" height="1.2" fill="#2a9df0"/>
<rect x="672.4" y="530.7" width="0.8" height="0.8" fill="#2a9df0"/>
<rect x="671.5" y="529.9" width="1" height="1" fill="#2a9df0"/>
<rect x="671.3" y="533.8" width="0.8" height="0.8" fill="#2a9df0"/>
<rect x="688.9" y="522.9" width="1" height="1" fill="#2a9df0"/>
<rect x="670.5" y="534.1" width="1.2" height="1.2" fill="#2a9df0"/>
<rect x="688.8" y="522.0" width="1.2" height="1.2" fill="#2a9df0"/>
<rect x="677.5" y="531.0" width="1.2" height="1.2" fill="#2a9df0"/>
<rect x="656.1" y="543.1" width="0.8" height="0.8" fill="#2a9df0"/>
<rect x="672.5" y="535.2" width="1.2" height="1.2" fill="#2a9df0"/>
<rect x="658.8" y="542.0" width="1.2" height="1.2" fill="#2a9df0"/>
<rect x="660.2" y="541.1" width="1" height="1" fill="#2a9df0"/>
<rect x="662.1" y="540.4" width="0.8" height="0.8" fill="#2a9df0"/>
<rect x="668.6" y="536.5" width="1.2" height="1.2" fill="#2a9df0"/>
<rect x="672.0" y="535.6" width="0.8" height="0.8" fill="#2a9df0"/>
<rect x="659.8" y="542.3" width="1.2" height="1.2" fill="#2a9df0"/>
<rect x="655.7" y="542.2" width="1.2" height="1.2" fill="#2a9df0"/>
<rect x="662.4" y="539.6" width="1.2" height="1.2" fill="#2a9df0"/>
<rect x="624.3" y="549.6" width="1.2" height="1.2" fill="#2a9df0"/>
<rect x="619.8" y="543.1" width="1" height="1" fill="#2a9df0"/>
<rect x="622.4" y="549.4" width="1" height="1" fill="#2a9df0"/>
<rect x="623.9" y="548.5" width="1.2" height="1.2" fill="#2a9df0"/>
<rect x="620.3" y="542.9" width="0.8" height="0.8" fill="#2a9df0"/>
<rect x="626.8" y="551.9" width="1" height="1" fill="#2a9df0"/>
<g>
<rect x="759.5" y="687.5" width="105" height="170" fill="#fff"/>
<path d="M759.5 687.5 L831 687.5 L829 690 L823 694 L816.6 696 L810 694 L806 699 L800 699 L792 702 L789.5 706 L788.6 708 L786.5 706 L785.5 703 L781 702 L774 703 L769 701 L764 698 L763 693 L759.5 692 Z" fill="#47b35a"/>
<path d="M829 690 L823 694 L816.6 696 L810 694 L806 699 L800 699 L792 702 L789.5 706 L788.6 708 L786.5 706 L785.5 703 L781 702" fill="none" stroke="#2a9df0" stroke-width="0.8"/>
<path d="M797 687.5 L793 692 L790 700 L788 705" fill="none" stroke="#b4b8b4" stroke-width="0.8"/>
<path d="M777 717 Q777.5 712 784 710.8 Q791.5 710 792 714 Q791 721 784.500 724.5 Q777.5 727 777 717 Z" fill="#47b35a"/>
<path d="M784 710.8 Q791.5 710 792 714 Q791 721 786.5 723.5" fill="none" stroke="#2a9df0" stroke-width="0.8"/>
<path d="M851 687.5 L853 693 L857.5 697 L860 690 L861 687.5" fill="#fff" stroke="#888" stroke-width="0.6"/>
<path d="M863.500 688 L862 694 L863.500 698" fill="none" stroke="#2a9df0" stroke-width="1"/>
<text x="819.5" y="713.5" font-size="5.2" fill="#222" font-family="Liberation Serif, Noto Serif CJK SC, serif" font-weight="700" >东沙群岛</text>
<text x="793" y="724.5" font-size="4.8" fill="#222" font-family="Liberation Serif, Noto Serif CJK SC, serif" font-weight="700" >海南岛</text>
<text x="788.5" y="732" font-size="5.2" fill="#222" font-family="Liberation Serif, Noto Serif CJK SC, serif" font-weight="700" >西沙群岛</text>
<text x="802" y="738.5" font-size="4.6" fill="#222" font-family="Liberation Serif, Noto Serif CJK SC, serif" font-weight="700" >永兴岛</text>
<text x="815.5" y="744.5" font-size="5.6" fill="#222" font-family="Liberation Serif, Noto Serif CJK SC, serif" font-weight="700" letter-spacing="0.8">中沙群岛</text>
<text x="828" y="750.5" font-size="4.8" fill="#222" font-family="Liberation Serif, Noto Serif CJK SC, serif" font-weight="700" >黄岩岛</text>
<text x="820.5" y="778" font-size="5.6" fill="#222" font-family="Liberation Serif, Noto Serif CJK SC, serif" font-weight="700" >南</text>
<text x="815" y="786.5" font-size="5.6" fill="#222" font-family="Liberation Serif, Noto Serif CJK SC, serif" font-weight="700" >沙</text>
<text x="807.5" y="794.5" font-size="5.6" fill="#222" font-family="Liberation Serif, Noto Serif CJK SC, serif" font-weight="700" >群</text>
<text x="800.5" y="802.5" font-size="5.6" fill="#222" font-family="Liberation Serif, Noto Serif CJK SC, serif" font-weight="700" >岛</text>
<text x="788" y="821.5" font-size="4.8" fill="#222" font-family="Liberation Serif, Noto Serif CJK SC, serif" font-weight="700" >曾母暗沙</text>
<text x="815.5" y="736" font-size="6.5" fill="#2a9df0" font-family="Liberation Serif, Noto Serif CJK SC, serif" font-weight="700" >南</text>
<text x="806" y="775.5" font-size="6.5" fill="#2a9df0" font-family="Liberation Serif, Noto Serif CJK SC, serif" font-weight="700" >海</text>
<path d="M864 701 L859 707" stroke="#111" stroke-width="1.2" fill="none"/>
<path d="M854 718.6 L850.8 726" stroke="#111" stroke-width="1.2" fill="none"/>
<path d="M848.7 739.4 L848.7 747.6" stroke="#111" stroke-width="1.2" fill="none"/>
<path d="M849.7 766.3 L846.6 774.6" stroke="#111" stroke-width="1.2" fill="none"/>
<path d="M832 794 L826 801" stroke="#111" stroke-width="1.2" fill="none"/>
<path d="M808 823.6 L800 826.7" stroke="#111" stroke-width="1.2" fill="none"/>
<path d="M790.3 765.7 L788.7 773.5" stroke="#111" stroke-width="1.2" fill="none"/>
<path d="M784 739.4 L787.6 746.6" stroke="#111" stroke-width="1.2" fill="none"/>
<path d="M777.3 798.8 Q775.8 803.500 777.3 807.7" stroke="#111" stroke-width="1.2" fill="none"/>
<path d="M790.3 765.7 Q791 770 788.7 773.5" stroke="#111" stroke-width="1.2" fill="none"/>
<rect x="815.3" y="786.7" width="1.5" height="1.5" fill="#e83aa0"/>
<rect x="838.2" y="775.4" width="1.5" height="1.5" fill="#e83aa0"/>
<rect x="821.1" y="792.2" width="1.5" height="1.5" fill="#e83aa0"/>
<rect x="818.1" y="788.2" width="1.5" height="1.5" fill="#e83aa0"/>
<rect x="808.2" y="796.6" width="1.5" height="1.5" fill="#e83aa0"/>
<rect x="814.8" y="790.6" width="1.5" height="1.5" fill="#e83aa0"/>
<rect x="822.9" y="794.6" width="1.5" height="1.5" fill="#e83aa0"/>
<rect x="807.5" y="791.1" width="1.5" height="1.5" fill="#e83aa0"/>
<rect x="827.4" y="777.3" width="1.5" height="1.5" fill="#e83aa0"/>
<rect x="806.9" y="798.9" width="1.5" height="1.5" fill="#e83aa0"/>
<rect x="829.9" y="771.6" width="1.5" height="1.5" fill="#e83aa0"/>
<rect x="838.1" y="776.9" width="1.5" height="1.5" fill="#e83aa0"/>
<rect x="831.3" y="774.1" width="1.5" height="1.5" fill="#e83aa0"/>
<rect x="809.1" y="802.1" width="1.5" height="1.5" fill="#e83aa0"/>
<rect x="823.0" y="779.4" width="1.5" height="1.5" fill="#e83aa0"/>
<rect x="836.6" y="772.2" width="1.5" height="1.5" fill="#e83aa0"/>
<rect x="818.7" y="795.3" width="1.5" height="1.5" fill="#e83aa0"/>
<rect x="830.5" y="777.7" width="1.5" height="1.5" fill="#e83aa0"/>
<rect x="809.3" y="803.8" width="1.5" height="1.5" fill="#e83aa0"/>
<rect x="822.4" y="793.8" width="1.5" height="1.5" fill="#e83aa0"/>
<rect x="820.9" y="782.3" width="1.5" height="1.5" fill="#e83aa0"/>
<rect x="812.6" y="804.0" width="1.5" height="1.5" fill="#e83aa0"/>
<rect x="820.2" y="790.8" width="1.5" height="1.5" fill="#e83aa0"/>
<rect x="813.9" y="801.6" width="1.5" height="1.5" fill="#e83aa0"/>
<rect x="825.5" y="791.7" width="1.5" height="1.5" fill="#e83aa0"/>
<rect x="820.5" y="782.1" width="1.5" height="1.5" fill="#e83aa0"/>
<rect x="817.2" y="787.3" width="1.5" height="1.5" fill="#e83aa0"/>
<rect x="816.4" y="796.8" width="1.5" height="1.5" fill="#e83aa0"/>
<rect x="826.0" y="781.5" width="1.5" height="1.5" fill="#e83aa0"/>
<rect x="813.4" y="794.7" width="1.5" height="1.5" fill="#e83aa0"/>
<rect x="823.8" y="778.0" width="1.5" height="1.5" fill="#e83aa0"/>
<rect x="822.6" y="778.4" width="1.5" height="1.5" fill="#e83aa0"/>
<rect x="825.0" y="790.2" width="1.5" height="1.5" fill="#e83aa0"/>
<rect x="823.2" y="785.0" width="1.5" height="1.5" fill="#e83aa0"/>
<rect x="819.1" y="794.7" width="1.5" height="1.5" fill="#e83aa0"/>
<rect x="820.1" y="789.7" width="1.5" height="1.5" fill="#e83aa0"/>
<rect x="810.7" y="791.3" width="1.5" height="1.5" fill="#e83aa0"/>
<rect x="822.1" y="783.5" width="1.5" height="1.5" fill="#e83aa0"/>
<rect x="820.7" y="794.1" width="1.5" height="1.5" fill="#e83aa0"/>
<rect x="807.8" y="791.0" width="1.5" height="1.5" fill="#e83aa0"/>
<rect x="832.8" y="774.7" width="1.5" height="1.5" fill="#e83aa0"/>
<rect x="827.1" y="776.7" width="1.5" height="1.5" fill="#e83aa0"/>
<rect x="828.3" y="780.5" width="1.5" height="1.5" fill="#e83aa0"/>
<rect x="832.0" y="778.7" width="1.5" height="1.5" fill="#e83aa0"/>
<rect x="829.8" y="779.9" width="1.5" height="1.5" fill="#e83aa0"/>
<rect x="832.5" y="780.9" width="1.5" height="1.5" fill="#e83aa0"/>
<rect x="837.6" y="773.9" width="1.5" height="1.5" fill="#e83aa0"/>
<rect x="838.3" y="776.8" width="1.5" height="1.5" fill="#e83aa0"/>
<rect x="834.3" y="777.3" width="1.5" height="1.5" fill="#e83aa0"/>
<rect x="829.0" y="781.1" width="1.5" height="1.5" fill="#e83aa0"/>
<rect x="839.5" y="774.3" width="1.5" height="1.5" fill="#e83aa0"/>
<rect x="830.8" y="780.6" width="1.5" height="1.5" fill="#e83aa0"/>
<rect x="804.9" y="738.8" width="1.5" height="1.5" fill="#e83aa0"/>
<rect x="802.4" y="734.4" width="1.5" height="1.5" fill="#e83aa0"/>
<rect x="805.9" y="738.6" width="1.5" height="1.5" fill="#e83aa0"/>
<rect x="802.7" y="736.3" width="1.5" height="1.5" fill="#e83aa0"/>
<rect x="802.1" y="737.9" width="1.5" height="1.5" fill="#e83aa0"/>
<rect x="800.3" y="734.8" width="1.5" height="1.5" fill="#e83aa0"/>
<rect x="806.3" y="734.5" width="1.5" height="1.5" fill="#e83aa0"/>
<rect x="818.1" y="742.6" width="1.5" height="1.5" fill="#e83aa0"/>
<rect x="818.2" y="743.2" width="1.5" height="1.5" fill="#e83aa0"/>
<rect x="814.4" y="742.8" width="1.5" height="1.5" fill="#e83aa0"/>
<rect x="826.5" y="704.4" width="1.5" height="1.5" fill="#e83aa0"/>
<rect x="830.5" y="704.1" width="1.5" height="1.5" fill="#e83aa0"/>
<rect x="831.5" y="706.9" width="1.5" height="1.5" fill="#e83aa0"/>
<rect x="830.9" y="705.6" width="1.5" height="1.5" fill="#e83aa0"/>
<rect x="840.3" y="745.9" width="1.5" height="1.5" fill="#e83aa0"/>
<rect x="788.6" y="794.2" width="1.5" height="1.5" fill="#e83aa0"/>
<rect x="793.7" y="793.8" width="1.5" height="1.5" fill="#e83aa0"/>
<rect x="789.6" y="796.2" width="1.5" height="1.5" fill="#e83aa0"/>
<rect x="788.0" y="795.1" width="1.5" height="1.5" fill="#e83aa0"/>
<rect x="807.0" y="810.1" width="1.5" height="1.5" fill="#e83aa0"/>
<rect x="805.6" y="812.4" width="1.5" height="1.5" fill="#e83aa0"/>
<rect x="805.5" y="811.1" width="1.5" height="1.5" fill="#e83aa0"/>
<rect x="851.5" y="812" width="1" height="1" fill="#2a9df0"/>
<rect x="833.500" y="830" width="31" height="20" fill="#fff" stroke="#333" stroke-width="0.9"/>
<text x="836" y="838" font-size="6" fill="#333" font-family="Liberation Serif, Noto Serif CJK SC, serif" font-weight="500" letter-spacing="0.8">南海诸岛</text>
<text x="837" y="843.3" font-size="4.6" fill="#333" font-family="Liberation Serif, Noto Serif CJK SC, serif" font-weight="400" >1:44 000 000</text>
<path d="M759.6 850 L759.6 686.8" fill="none" stroke="#444" stroke-width="1.5"/><path d="M757.500 686.9 L864.8 686.9" fill="none" stroke="#444" stroke-width="1.9"/>
<path d="M864.500 687 L864.500 850" fill="none" stroke="#555" stroke-width="1"/>
</g>
</svg>

<!-- legend -->
<div class="lg" style="top:687px;background:#258f39"></div><div class="lgt" style="top:688px"><span style="font-size:27px;line-height:0;position:relative;top:1px;margin-right:3px">≤</span>10ms</div>
<div class="lg" style="top:716px;background:#45b35a"></div><div class="lgt" style="top:717px">11~80ms</div>
<div class="lg" style="top:744px;background:#72d485"></div><div class="lgt" style="top:745px">81~150ms</div>
<div class="lg" style="top:773px;background:#ffc34d"></div><div class="lgt" style="top:774px">151~250ms</div>
<div class="lg" style="top:802px;background:#ff874d"></div><div class="lgt" style="top:803px">&gt;250ms</div>
<div class="lg" style="top:830px;background:#ea4b50"></div><div class="lgt" style="top:831px">超时</div>

<!-- right panel -->
<div class="panel"><div class="ptabs"></div></div>
<svg class="abs" style="left:910px;top:328px" width="112" height="58" viewBox="910 328 112 58"><path d="M916 385 L923.5 337 Q924.5 331 931 331 L1001 331 Q1007.5 331 1008.5 337 L1015 385 Z" fill="#fff"/></svg>
<div class="ptab" style="left:949px;color:#222;font-weight:500">全部</div>
<div class="ptab" style="left:1051px">电信</div>
<div class="ptab" style="left:1152px">多线</div>
<div class="ptab" style="left:1253px">联通</div>
<div class="ptab" style="left:1354px">移动</div>
<div class="ptab" style="left:1455px">其他</div>

<div class="num" style="left:988px;color:#222">97</div><div class="lab" style="left:988px">监测节点数</div>
<div class="num g1" style="left:1162px">1ms</div><div class="lab" style="left:1162px">最快(中国香港)</div>
<div class="num y" style="left:1336px">215ms</div><div class="lab" style="left:1336px">最慢(中国香港)</div>
<div class="num g2" style="left:1510px">61.7ms</div><div class="lab" style="left:1510px">平均响应</div>

<table>
<colgroup><col style="width:94px"><col style="width:219px"><col style="width:220px"><col style="width:131px"></colgroup>
<tr><th>线路</th><th>最快节点</th><th>最慢节点</th><th>平均响应</th></tr>
<tr><td class="k">电信</td><td><span class="l">浙江绍兴</span><span class="r g2">35ms</span></td><td><span class="l">新疆乌鲁木齐</span><span class="r g3">112ms</span></td><td class="a g2">67.8ms</td></tr>
<tr><td class="k">多线</td><td><span class="l">上海</span><span class="r g2">35ms</span></td><td><span class="l">河南洛阳</span><span class="r g2">56ms</span></td><td class="a g2">46.8ms</td></tr>
<tr><td class="k">联通</td><td><span class="l">内蒙古呼和浩特</span><span class="r g2">47ms</span></td><td><span class="l">甘肃兰州</span><span class="r g3">101ms</span></td><td class="a g2">72.4ms</td></tr>
<tr><td class="k">移动</td><td><span class="l">浙江宁波</span><span class="r g2">63ms</span></td><td><span class="l">西藏</span><span class="r g3">95ms</span></td><td class="a g3">83.6ms</td></tr>
<tr><td class="k">其他</td><td><span class="l">中国香港</span><span class="r g1">1ms</span></td><td><span class="l">中国香港</span><span class="r y">215ms</span></td><td class="a g2">43.1ms</td></tr>
</table>

<div class="frame-r"></div><div class="frame-b"></div>
</body>
</html>
